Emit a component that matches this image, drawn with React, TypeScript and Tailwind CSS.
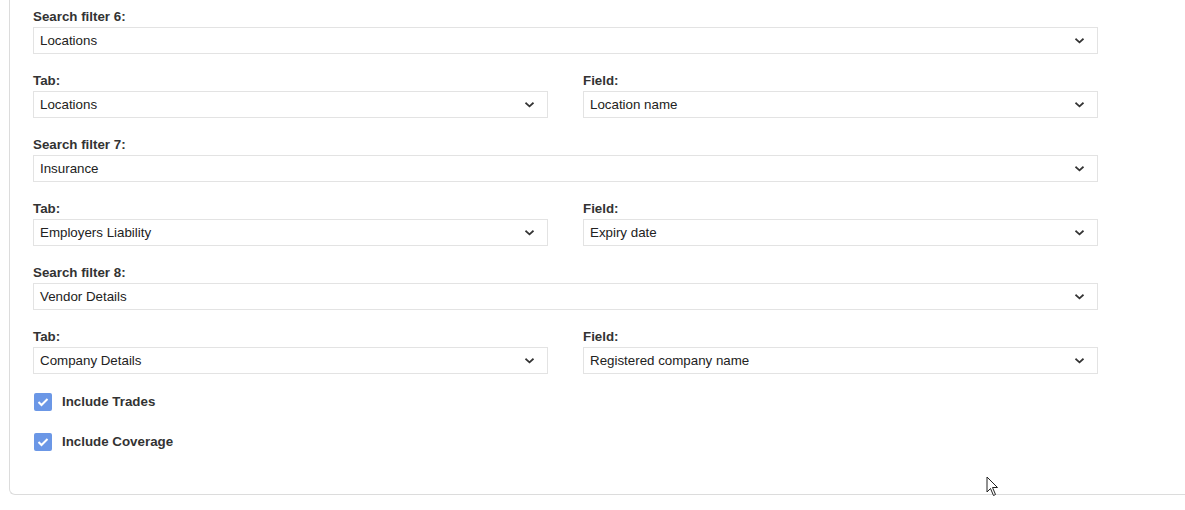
import React from "react";

const Chevron = () => (
  <svg width="9" height="6" viewBox="0 0 9 6" className="shrink-0">
    <path d="M1.2 1.3 L4.5 4.3 L7.8 1.3" fill="none" stroke="#333" strokeWidth="1.8" strokeLinecap="square" />
  </svg>
);

const Select = ({ value }: { value: string }) => (
  <div className="flex h-[27px] items-center justify-between border border-[#e3e3e3] bg-white pl-[6px] pr-[13px] text-[13.33px] text-[#222]">
    <span>{value}</span>
    <Chevron />
  </div>
);

const Field = ({ label, value }: { label: string; value: string }) => (
  <div className="flex flex-col">
    <div className="mb-[2px] text-[13.33px] font-bold leading-[16px] text-[#333]">{label}</div>
    <Select value={value} />
  </div>
);

const Check = ({ label }: { label: string }) => (
  <div className="flex items-center gap-[10px]">
    <div className="flex h-[18px] w-[18px] items-center justify-center rounded-[2px] bg-[#6b97e6]">
      <svg width="12" height="10" viewBox="0 0 12 10">
        <path d="M1.5 5 L4.5 8 L10.5 2" fill="none" stroke="#fff" strokeWidth="2" />
      </svg>
    </div>
    <span className="text-[13.33px] font-bold text-[#333]">{label}</span>
  </div>
);

export default function App() {
  const groups = [
    { sf: "Search filter 6:", sv: "Locations", tab: "Locations", field: "Location name" },
    { sf: "Search filter 7:", sv: "Insurance", tab: "Employers Liability", field: "Expiry date" },
    { sf: "Search filter 8:", sv: "Vendor Details", tab: "Company Details", field: "Registered company name" },
  ];
  return (
    <div className="relative h-[510px] w-[1185px] overflow-hidden bg-white" style={{ fontFamily: "'Liberation Sans', Arial, sans-serif" }}>
      <div className="ml-[9px] w-[1200px] rounded-bl-[6px] border-b border-l border-[#dcdcdc] pb-[42px] pl-[23px] pt-[9px]">
        <div className="flex w-[1065px] flex-col gap-[19px]">
          {groups.map((g) => (
            <React.Fragment key={g.sf}>
              <Field label={g.sf} value={g.sv} />
              <div className="grid grid-cols-2 gap-x-[35px]">
                <Field label="Tab:" value={g.tab} />
                <Field label="Field:" value={g.field} />
              </div>
            </React.Fragment>
          ))}
        </div>
        <div className="mt-[18px] flex flex-col gap-[20px] pl-[1px]">
          <Check label="Include Trades" />
          <Check label="Include Coverage" />
        </div>
      </div>
      <svg className="absolute left-[986px] top-[476px]" width="14" height="21" viewBox="0 0 14 21">
        <path d="M1 1 L1 16 L4.5 12.5 L7.5 19.5 L9.5 18.5 L6.5 11.5 L11.5 11.5 Z" fill="#fff" stroke="#222" strokeWidth="1" strokeLinejoin="round" />
      </svg>
    </div>
  );
}
